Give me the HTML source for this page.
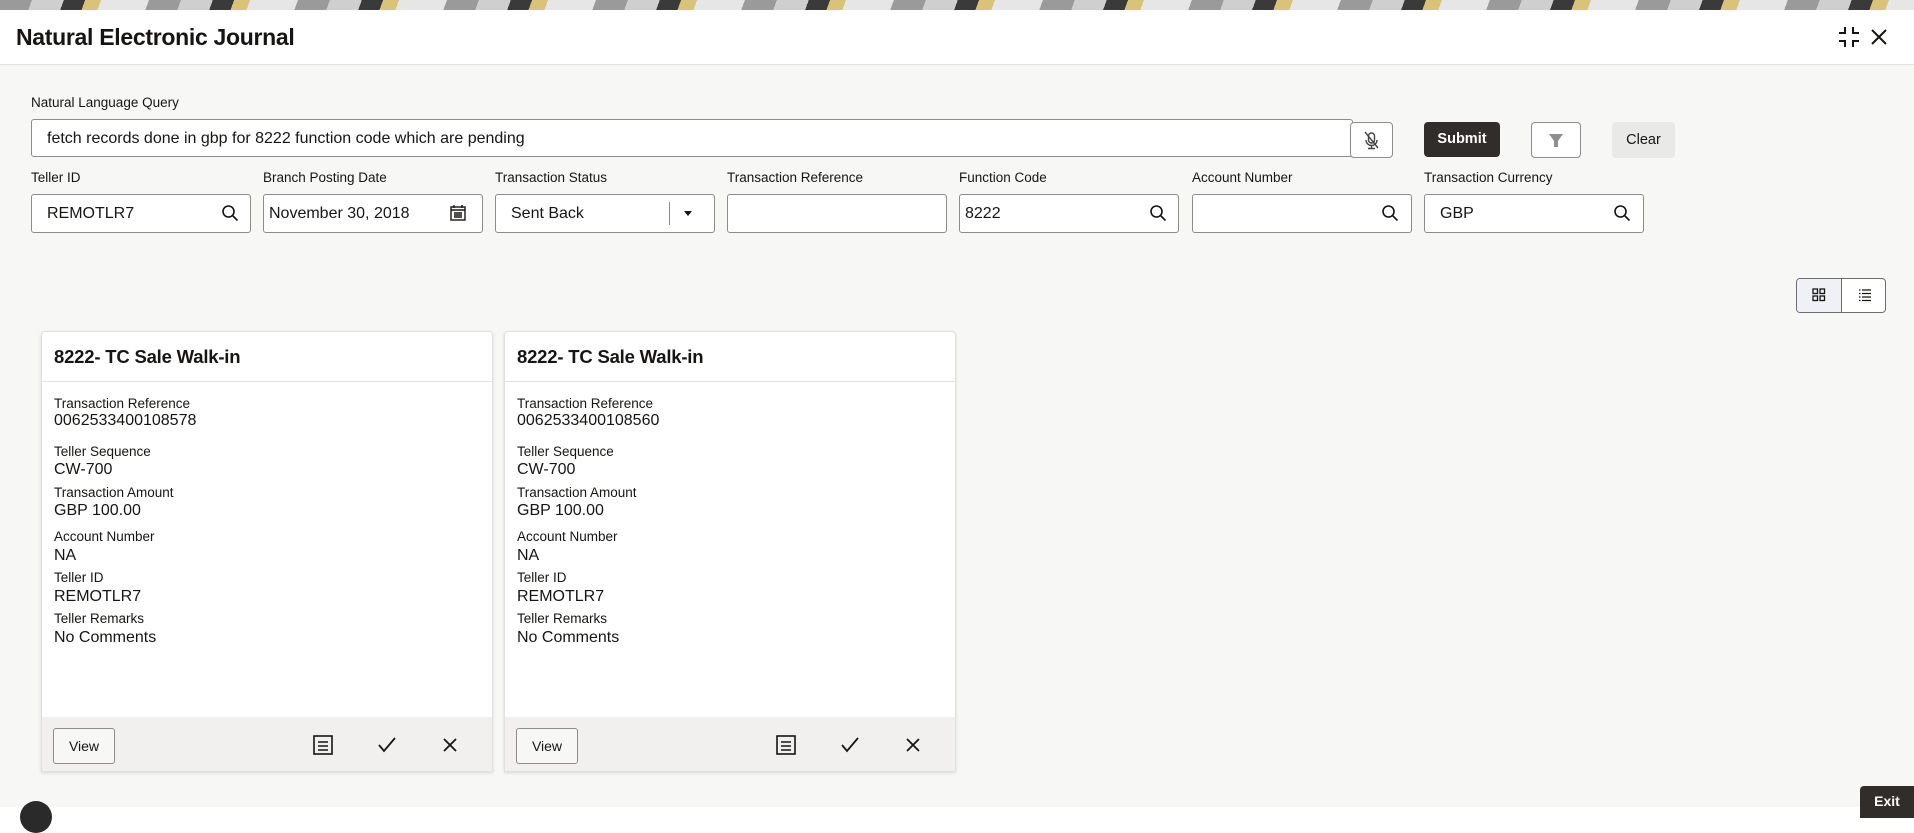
<!DOCTYPE html>
<html><head><meta charset="utf-8"><style>
*{box-sizing:border-box;margin:0;padding:0}
body{width:1914px;height:818px;overflow:hidden;background:#fff;font-family:"Liberation Sans",sans-serif;color:#161513;position:relative}
.abs{position:absolute}
.banner{left:0;top:0;width:1914px;height:10px;background:repeating-linear-gradient(110deg,#9a9a9a 0 30px,#cfcfcf 30px 60px,#3a3a3a 60px 80px,#d9c27a 80px 95px,#e6e6e6 95px 140px)}
.bg{left:0;top:65px;width:1914px;height:742px;background:#f7f7f6}
.hdr{left:0;top:10px;width:1914px;height:55px;background:#fff;border-bottom:1px solid #e2e2e2}
.title{left:16px;top:24px;font-size:23px;font-weight:bold;letter-spacing:-0.3px}
.lbl{font-size:13.5px;color:#161513}
.inp{background:#fff;border:1px solid #8c8c8c;border-radius:3px;height:39px;font-size:16px;padding:0 15px;line-height:37px}
.btn{border:1px solid #8c8c8c;border-radius:4px;background:#fff}
.card{background:#fff;border:1px solid #e0e0e0;border-radius:4px 4px 0 0;width:452px;height:441px;top:331px;box-shadow:0 1px 3px rgba(0,0,0,.12);overflow:hidden}
.card h3{font-size:18.5px;font-weight:bold;padding:0 12px;height:50px;line-height:50px;border-bottom:1px solid #e2e2e2;letter-spacing:-0.2px}
.card .k{position:absolute;left:12px;font-size:13.5px}
.card .v{position:absolute;left:12px;font-size:16px}
.foot{position:absolute;left:0;bottom:0;width:100%;height:54px;background:#f1f0ef}
.view{position:absolute;left:11px;top:11px;width:62px;height:36px;border:1px solid #8c8c8c;border-radius:3px;background:#f7f7f6;font-size:14px;text-align:center;line-height:34px}
</style></head><body>
<div class="abs banner"></div>
<div class="abs hdr"></div>
<div class="abs bg"></div>
<div class="abs title">Natural Electronic Journal</div>
<svg class="abs" style="left:1838px;top:26px" width="22" height="22" viewBox="0 0 22 22" fill="none" stroke="#161513" stroke-width="2"><path d="M7 1v6H1M15 1v6h6M7 21v-6H1M15 21v-6h6"/></svg>
<svg class="abs" style="left:1870px;top:28px" width="18" height="18" viewBox="0 0 18 18" stroke="#161513" stroke-width="2"><path d="M2 2l14 14M16 2L2 16"/></svg>

<div class="abs lbl" style="left:31px;top:95px">Natural Language Query</div>
<div class="abs inp" style="left:31px;top:119px;width:1322px;height:38px;font-size:16px">fetch records done in gbp for 8222 function code which are pending</div>
<div class="abs btn" style="left:1350px;top:122px;width:43px;height:36px"><svg width="41" height="34" viewBox="0 0 41 34" fill="none" stroke="#444" stroke-width="1.4"><rect x="17.5" y="10" width="6" height="10" rx="3"/><path d="M15 17a5.5 5.5 0 0011 0M20.5 22.5v3M17 25.5h7M14 9l13 16"/></svg></div>
<div class="abs" style="left:1424px;top:122px;width:76px;height:35px;background:#312d2a;border-radius:4px;color:#fff;font-weight:bold;font-size:14.5px;text-align:center;line-height:35px">Submit</div>
<div class="abs btn" style="left:1531px;top:122px;width:50px;height:36px"><svg width="48" height="34" viewBox="0 0 48 34"><path d="M17 11h14l-5 7v6h-4v-6z" fill="#8f8f8f"/></svg></div>
<div class="abs" style="left:1612px;top:122px;width:63px;height:36px;background:#e9e9e8;border-radius:4px;font-size:14.5px;text-align:center;line-height:36px">Clear</div>

<div class="abs lbl" style="left:31px;top:170px">Teller ID</div>
<div class="abs lbl" style="left:263px;top:170px">Branch Posting Date</div>
<div class="abs lbl" style="left:495px;top:170px">Transaction Status</div>
<div class="abs lbl" style="left:727px;top:170px">Transaction Reference</div>
<div class="abs lbl" style="left:959px;top:170px">Function Code</div>
<div class="abs lbl" style="left:1192px;top:170px">Account Number</div>
<div class="abs lbl" style="left:1424px;top:170px">Transaction Currency</div>

<div class="abs inp" style="left:31px;top:194px;width:220px">REMOTLR7</div>
<div class="abs inp" style="left:263px;top:194px;width:220px;padding-left:5px">November 30, 2018</div>
<div class="abs inp" style="left:495px;top:194px;width:220px">Sent Back</div>
<div class="abs" style="left:669px;top:202px;width:1px;height:23px;background:#8c8c8c"></div>
<div class="abs" style="left:684px;top:211px;width:0;height:0;border-left:4px solid transparent;border-right:4px solid transparent;border-top:5px solid #161513"></div>
<div class="abs inp" style="left:727px;top:194px;width:220px"></div>
<div class="abs inp" style="left:959px;top:194px;width:220px;padding-left:5px">8222</div>
<div class="abs inp" style="left:1192px;top:194px;width:220px"></div>
<div class="abs inp" style="left:1424px;top:194px;width:220px">GBP</div>
<svg class="abs" style="left:221px;top:204px" width="18" height="18" viewBox="0 0 18 18" fill="none" stroke="#161513" stroke-width="1.6"><circle cx="7.5" cy="7.5" r="5.5"/><path d="M11.5 11.5l5 5"/></svg>
<svg class="abs" style="left:1149px;top:204px" width="18" height="18" viewBox="0 0 18 18" fill="none" stroke="#161513" stroke-width="1.6"><circle cx="7.5" cy="7.5" r="5.5"/><path d="M11.5 11.5l5 5"/></svg>
<svg class="abs" style="left:1381px;top:204px" width="18" height="18" viewBox="0 0 18 18" fill="none" stroke="#161513" stroke-width="1.6"><circle cx="7.5" cy="7.5" r="5.5"/><path d="M11.5 11.5l5 5"/></svg>
<svg class="abs" style="left:1613px;top:204px" width="18" height="18" viewBox="0 0 18 18" fill="none" stroke="#161513" stroke-width="1.6"><circle cx="7.5" cy="7.5" r="5.5"/><path d="M11.5 11.5l5 5"/></svg>
<svg class="abs" style="left:449px;top:204px" width="18" height="18" viewBox="0 0 18 18" fill="none" stroke="#161513" stroke-width="1.4"><rect x="2" y="3" width="14" height="13"/><path d="M2 6h14M5 1v3M13 1v3M5 9h8M5 11h8M5 13h8"/></svg>

<div class="abs" style="left:1796px;top:278px;width:90px;height:35px;border:1px solid #6d6d6d;border-radius:4px;background:#fff;overflow:hidden">
<div style="position:absolute;left:0;top:0;width:45px;height:33px;background:#f0f1f6;border-right:1px solid #6d6d6d"></div>
<svg style="position:absolute;left:15px;top:9px" width="14" height="14" viewBox="0 0 14 14" fill="none" stroke="#161513" stroke-width="1.3"><rect x="1" y="1" width="4.5" height="4.5"/><rect x="8" y="1" width="4.5" height="4.5"/><rect x="1" y="8" width="4.5" height="4.5"/><rect x="8" y="8" width="4.5" height="4.5"/></svg>
<svg style="position:absolute;left:61px;top:9px" width="14" height="14" viewBox="0 0 14 14" stroke="#161513" stroke-width="1.3"><path d="M1 2h1.5M1 5.5h1.5M1 9h1.5M1 12.5h1.5M4 2h9M4 5.5h9M4 9h9M4 12.5h9"/></svg>
</div>

<div class="abs card" style="left:41px">
<h3>8222- TC Sale Walk-in</h3>
<div class="k" style="top:64px">Transaction Reference</div><div class="v" style="top:80px">0062533400108578</div>
<div class="k" style="top:112px">Teller Sequence</div><div class="v" style="top:129px">CW-700</div>
<div class="k" style="top:153px">Transaction Amount</div><div class="v" style="top:170px">GBP 100.00</div>
<div class="k" style="top:197px">Account Number</div><div class="v" style="top:215px">NA</div>
<div class="k" style="top:238px">Teller ID</div><div class="v" style="top:256px">REMOTLR7</div>
<div class="k" style="top:279px">Teller Remarks</div><div class="v" style="top:297px">No Comments</div>
<div class="foot"><div class="view">View</div>
<svg style="position:absolute;left:270px;top:17px" width="22" height="22" viewBox="0 0 22 22" fill="none" stroke="#161513" stroke-width="1.6"><rect x="2" y="2" width="18" height="18"/><path d="M6 8h10M6 12h10M6 16h10"/></svg>
<svg style="position:absolute;left:334px;top:17px" width="22" height="22" viewBox="0 0 22 22" fill="none" stroke="#161513" stroke-width="1.8"><path d="M3 11l5 6L19 4"/></svg>
<svg style="position:absolute;left:399px;top:19px" width="18" height="18" viewBox="0 0 18 18" stroke="#161513" stroke-width="1.8"><path d="M3 3l12 12M15 3L3 15"/></svg>
</div></div>

<div class="abs card" style="left:504px">
<h3>8222- TC Sale Walk-in</h3>
<div class="k" style="top:64px">Transaction Reference</div><div class="v" style="top:80px">0062533400108560</div>
<div class="k" style="top:112px">Teller Sequence</div><div class="v" style="top:129px">CW-700</div>
<div class="k" style="top:153px">Transaction Amount</div><div class="v" style="top:170px">GBP 100.00</div>
<div class="k" style="top:197px">Account Number</div><div class="v" style="top:215px">NA</div>
<div class="k" style="top:238px">Teller ID</div><div class="v" style="top:256px">REMOTLR7</div>
<div class="k" style="top:279px">Teller Remarks</div><div class="v" style="top:297px">No Comments</div>
<div class="foot"><div class="view">View</div>
<svg style="position:absolute;left:270px;top:17px" width="22" height="22" viewBox="0 0 22 22" fill="none" stroke="#161513" stroke-width="1.6"><rect x="2" y="2" width="18" height="18"/><path d="M6 8h10M6 12h10M6 16h10"/></svg>
<svg style="position:absolute;left:334px;top:17px" width="22" height="22" viewBox="0 0 22 22" fill="none" stroke="#161513" stroke-width="1.8"><path d="M3 11l5 6L19 4"/></svg>
<svg style="position:absolute;left:399px;top:19px" width="18" height="18" viewBox="0 0 18 18" stroke="#161513" stroke-width="1.8"><path d="M3 3l12 12M15 3L3 15"/></svg>
</div></div>

<div class="abs" style="left:1860px;top:786px;width:54px;height:32px;background:#312d2a;border-radius:4px 0 0 0;color:#fff;font-weight:bold;font-size:14px;text-align:center;line-height:30px">Exit</div>
<div class="abs" style="left:20px;top:801px;width:32px;height:32px;border-radius:50%;background:#2a2a2a"></div>
</body></html>
